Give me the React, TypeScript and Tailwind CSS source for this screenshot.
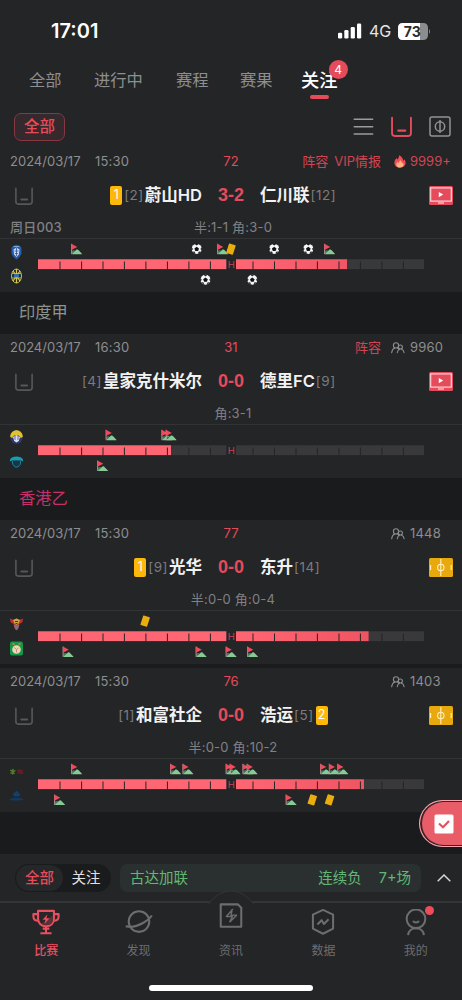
import React from "react";

type MarkerKind = "flag" | "ball" | "card";

interface Marker {
  kind: MarkerKind;
  x: number;
  row: "home" | "away";
}

interface Match {
  id: number;
  date: string;
  time: string;
  minute: string;
  tags: string[];
  viewers: string;
  hot?: boolean;
  home: string;
  homeRank: string;
  homeCards?: number;
  away: string;
  awayRank: string;
  awayCards?: number;
  score: string;
  note?: string;
  summary: string;
  media: "video" | "pitch";
  progress: number;
  markers: Marker[];
}

const place = (kind: MarkerKind, row: "home" | "away", xs: number[]): Marker[] =>
  xs.map((x) => ({ kind, row, x }));

/* ---------------- MATCH DATA ---------------- */
const ulsan: Match = {
  id: 1,
  date: "2024/03/17",
  time: "15:30",
  minute: "72",
  tags: ["阵容", "VIP情报"],
  viewers: "9999+",
  hot: true,
  home: "蔚山HD",
  homeRank: "[2]",
  homeCards: 1,
  away: "仁川联",
  awayRank: "[12]",
  score: "3-2",
  note: "周日003",
  summary: "半:1-1 角:3-0",
  media: "video",
  progress: 347,
  markers: [
    ...place("flag", "home", [71, 217, 324]),
    ...place("ball", "home", [196.7, 274.2, 308.3]),
    ...place("card", "home", [231]),
    ...place("ball", "away", [205.5, 252.3])
  ]
};

const kashmir: Match = {
  id: 2,
  date: "2024/03/17",
  time: "16:30",
  minute: "31",
  tags: ["阵容"],
  viewers: "9960",
  home: "皇家克什米尔",
  homeRank: "[4]",
  away: "德里FC",
  awayRank: "[9]",
  score: "0-0",
  summary: "角:3-1",
  media: "video",
  progress: 171,
  markers: [
    ...place("flag", "home", [105.5, 161.3, 165.5]),
    ...place("flag", "away", [97])
  ]
};

const kwongWah: Match = {
  id: 3,
  date: "2024/03/17",
  time: "15:30",
  minute: "77",
  tags: [],
  viewers: "1448",
  home: "光华",
  homeRank: "[9]",
  homeCards: 1,
  away: "东升",
  awayRank: "[14]",
  score: "0-0",
  summary: "半:0-0 角:0-4",
  media: "pitch",
  progress: 368.6,
  markers: [
    ...place("card", "home", [145.2]),
    ...place("flag", "away", [62.5, 195.5, 225.5, 247])
  ]
};

const wofoo: Match = {
  id: 4,
  date: "2024/03/17",
  time: "15:30",
  minute: "76",
  tags: [],
  viewers: "1403",
  home: "和富社企",
  homeRank: "[1]",
  away: "浩运",
  awayRank: "[5]",
  awayCards: 2,
  score: "0-0",
  summary: "半:0-0 角:10-2",
  media: "pitch",
  progress: 364,
  markers: [
    ...place("flag", "home", [71, 170, 182.3, 225.5, 229.5, 242.3, 246.5, 320, 328.7, 337.2]),
    ...place("flag", "away", [54, 285.5]),
    ...place("card", "away", [312.3, 329.6])
  ]
};

/* ---------------- SMALL ICONS ---------------- */
const TrayIcon = ({ className, size = 18 }: { className: string; size?: number }) => (
  <svg
    width={size}
    height={size}
    viewBox="0 0 20 20"
    fill="none"
    stroke="currentColor"
    strokeWidth="1.800"
    strokeLinecap="round"
    className={className}
  >
    <path d="M1 1.500v15Q1 19 3.500 19h13q2.500 0 2.500-2.500v-15" />
    <path d="M7 14h6.500" strokeWidth="2.200" />
  </svg>
);

const FlameIcon = () => (
  <svg width="12" height="13" viewBox="0 0 12 13">
    <path
      d="M4.900.2C5.500 2 4 3.300 3.300 4.600 2.800 4.200 2.700 3.600 2.700 3.100 1.300 4.400.3 6 .4 8c.1 2.700 2.400 4.700 5.500 4.700S11.600 10.700 11.600 8c0-1.400-.5-2.800-1.300-3.700-.1.700-.5 1.200-1 1.500C9 3.200 7.300 1 4.900.2Z"
      fill="#ed5058"
    />
    <path
      d="M5.900 5.200c.2 1.200-1.200 2-1.500 2.900-.4-.2-.6-.6-.6-1-1 .8-1.500 1.700-1.400 2.800.2 1.700 1.700 2.700 3.600 2.700s3.400-1 3.500-2.800c0-.8-.3-1.600-.8-2.200-.1.400-.3.700-.7.900 0-1.400-.8-2.700-2.100-3.300Z"
      fill="#ffb37c"
    />
  </svg>
);

const PeopleIcon = () => (
  <svg
    width="14"
    height="12"
    viewBox="0 0 14 12"
    fill="none"
    stroke="#8d8e90"
    strokeWidth="1.100"
    strokeLinecap="round"
  >
    <circle cx="5" cy="3.400" r="2.600" />
    <path d="M.7 10.800c.2-2.600 1.300-4 3-4.700M6.300 5.800c.9.500 1.400 1.200 1.800 2" />
    <circle cx="9.400" cy="5" r="2" />
    <path d="M6.300 10.800c.2-1.900.9-3 2.100-4M10.500 6.900c1.500.7 2.400 2 2.600 3.900" />
  </svg>
);

const VideoIcon = () => (
  <svg width="24" height="19" viewBox="0 0 24 19">
    <rect width="24" height="19" rx="1.500" fill="#e54b5b" />
    <rect x="1.700" y="1.900" width="20.600" height="13.200" fill="none" stroke="#f9d3d7" strokeWidth="1.200" />
    <path d="M9.800 6v5.200l4.400-2.600Z" fill="#fff" />
    <path d="M9 17h6" stroke="#f9d3d7" strokeWidth="1.200" />
  </svg>
);

const PitchIcon = () => (
  <svg width="24" height="19" viewBox="0 0 24 19">
    <rect width="24" height="19" rx="1.500" fill="#e7a90d" />
    <g fill="none" stroke="#fff0c4" strokeWidth="1.100">
      <path d="M11.800 1v17M1.600 7v5M22.200 7v5" />
      <circle cx="11.800" cy="9.500" r="3.200" />
    </g>
  </svg>
);

const CardBadge = ({ count }: { count: number }) => (
  <span className="flex h-[19px] w-3 items-center justify-center rounded-[2px] bg-[#fdb80a] text-[12.500px] leading-none text-white">
    {count}
  </span>
);

/* ---------------- TEAM CRESTS ---------------- */
const Crests = ({ id }: { id: number }) => {
  if (id === 1) {
    return (
      <>
        <path d="M11.500 8.500l2.500-2 2.500-.8 2.500.8 2.500 2v6q-1.500 4-5 6-3.500-2-5-6Z" fill="#245cae" />
        <path d="M13.500 10.500l3-2 3 2-.7 5-2.300 2.500-2.300-2.500Z" fill="#c9d8ed" />
        <path d="M14.500 12h4M15 14.500h3M16.500 9v8" stroke="#31528d" strokeWidth=".8" />
        <path d="M13.500 7.500h6" stroke="#71a7dc" strokeWidth="1" />
        <ellipse cx="16.500" cy="37" rx="5" ry="7" fill="#202b36" stroke="#c8bd45" strokeWidth="1" />
        <path
          d="M13 32l3.500 5-3.500 5M20 32l-3.500 5 3.500 5M16.500 30v14"
          fill="none"
          stroke="#d7c94e"
          strokeWidth="1.200"
        />
        <path d="M14 35h5v3.500h-5z" fill="#336fa7" />
        <path d="M12 34.500h9M12 39h9" stroke="#d7c94e" strokeWidth=".8" />
      </>
    );
  }
  if (id === 2) {
    return (
      <>
        <circle cx="16.500" cy="13" r="6" fill="#30366f" />
        <path d="M10.200 12c0-9 12.600-9 12.600 0l-2.200 1c-1-4-7.200-4-8.200 0Z" fill="#e1c331" />
        <path d="M13 12l3.500-2 3.500 2-1.200 4-2.300 1.500-2.300-1.500Z" fill="#dbe0ec" />
        <path d="M15 11v4M18 11v4" stroke="#454980" strokeWidth=".8" />
        <path d="M10 34.500c1.500-4 11.500-4 13 0v2l-2-1H12l-2 1Z" fill="#129eb4" />
        <path d="M12.500 36v3l2.500 3h3l2.500-3v-3" fill="#203544" stroke="#167e9a" />
      </>
    );
  }
  if (id === 3) {
    return (
      <>
        <path d="M9.800 7.500l4 1.500 2.700-1.500L19.200 9l4-1.500-1 4-3 1.500-1 5-1.700 1.500-1.700-1.500-1-5-3-1.500Z" fill="#be3131" />
        <path d="M13 9l3.500-1.500L20 9l-1.500 3.500-2 1.500-2-1.500Z" fill="#cda63e" />
        <path d="M13.500 13.500l3 1 3-1-1.500 4-1.500 1.500-1.500-1.500Z" fill="#78738c" />
        <path d="M15 10.500h3M15.500 12.500h2" stroke="#32364f" strokeWidth="1" />
        <rect x="10" y="30.500" width="13" height="14" rx="2" fill="#14964b" />
        <circle cx="16.500" cy="38.500" r="4.300" fill="#ead9b4" />
        <path d="M12.500 32.500l2 1M20.500 32.500l-2 1" stroke="#d77f2b" strokeWidth="1.800" />
        <path d="M14 36.500l2.500 2 2-1.500M16.500 38.500v3" fill="none" stroke="#c87b6c" strokeWidth=".8" />
      </>
    );
  }
  return (
    <>
      <path
        d="M10 11l1.500 1 1.500-1.500 1 2 1.500-1M10.500 14.500l2-1.500 2 2M12.500 10.500v5"
        fill="none"
        stroke="#4e7e26"
        strokeWidth="1.200"
      />
      <path
        d="M17 11l1.500 1 1-1.500 1.500 1.500 2-1M17.500 14.500l2-2 1 2 1.500-1.500 1 2"
        fill="none"
        stroke="#6b2026"
        strokeWidth="1.100"
      />
      <path d="M14 34l2.500-2.500L19 34l1.500 1-1.500 2.500h-5L12.500 35Z" fill="#123f6b" />
      <path d="M9 40.500l4-1.500h7l4 1.500-3 1h-9Z" fill="#113b61" />
    </>
  );
};

/* ---------------- EVENT TIMELINE ---------------- */
const TICKS = [
  60, 81.6, 103, 124.4, 145.9, 167.4, 188.9, 210.4, 253, 274.5, 296, 317.4, 339, 360.4, 381.9, 403.4
];

const MarkerShape = ({ kind }: { kind: MarkerKind }) => {
  if (kind === "flag") {
    return (
      <>
        <path d="M1.200 10.400V7.600l1.600-.9 1.300.5 1.300-1.400q1.500-.4 2.500 1l3 3.100v.5Z" fill="#86cb94" />
        <path d="M1.200 9.600V7l1.500-.6 1.200 1.200Z" fill="#47705a" />
        <path d="M.6 0v10.400" stroke="#b4a5a4" strokeWidth=".9" />
        <path d="M.4 0L6.300 3.100 .4 6.200Z" fill="#f04a5b" />
      </>
    );
  }
  if (kind === "ball") {
    return (
      <>
        <circle cx="0" cy="5.100" r="5" fill="#f6f6f6" />
        <path d="M0 2.900l2.300 1.700-.9 2.600h-2.800l-.9-2.600Z" fill="#111" />
        <path
          d="M-1.500.3h3L0 1.400ZM4.900 4v2.400L4 5.100ZM-4.900 4v2.400L-4 5.100ZM1.700 9.700l2.100-1.600-1.600-.1ZM-1.700 9.700l-2.100-1.600 1.600-.1Z"
          fill="#111"
          stroke="#111"
          strokeWidth=".4"
        />
      </>
    );
  }
  return (
    <rect x="-3.500" y=".3" width="7" height="10" rx=".6" fill="#e9ad10" transform="rotate(18 0 5.200)" />
  );
};

const Timeline = ({ match }: { match: Match }) => {
  const { id, progress, markers } = match;
  const gradientId = `progress-${id}`;

  return (
    <svg width="462" height="53" viewBox="0 0 462 53" className="block">
      <defs>
        <linearGradient id={gradientId} gradientUnits="userSpaceOnUse" x1="236" y1="0" x2="380" y2="0">
          <stop offset="0" stopColor="#ff6673" />
          <stop offset="1" stopColor="#ee5261" />
        </linearGradient>
      </defs>
      <Crests id={id} />
      <rect x="38" y="20.300" width="188.300" height="9.800" fill="#39393b" />
      <rect x="236" y="20.300" width="188" height="9.800" fill="#39393b" />
      <rect x="38" y="20.300" width={Math.min(progress, 226.3) - 38} height="9.800" fill="#ff6673" />
      {progress > 236 && (
        <rect x="236" y="20.300" width={progress - 236} height="9.800" fill={`url(#${gradientId})`} />
      )}
      {TICKS.map((x) => (
        <rect key={x} x={x - 0.5} y="22.500" width="1" height="7.700" fill="#242527" />
      ))}
      <text x="231.200" y="29" textAnchor="middle" fontSize="9.500" fill="#d33f50">
        H
      </text>
      {markers.map(({ kind, x, row }) => (
        <g key={`${kind}-${row}-${x}`} transform={`translate(${x} ${row === "home" ? 4.8 : 35.6})`}>
          <MarkerShape kind={kind} />
        </g>
      ))}
    </svg>
  );
};

/* ---------------- MATCH CARD ---------------- */
const MatchCard = ({ match }: { match: Match }) => (
  <article className="h-36 bg-[#242527]">
    <div className="grid h-[27px] grid-cols-[202px_58px_202px] items-center text-[13px] text-[#8d8e90]">
      <div className="flex gap-[15px] pl-[10px]">
        <span className="w-[70px] whitespace-nowrap">{match.date}</span>
        <span className="tracking-[0.2px]">{match.time}</span>
      </div>
      <span className="text-center text-[#e54b5b]">{match.minute}</span>
      <div className="flex items-center justify-end">
        <div className="flex gap-1.5 text-[#d04553]">
          {match.tags.map((tag) => (
            <span key={tag}>{tag}</span>
          ))}
        </div>
        {match.hot ? (
          <span className="ml-[13px] flex w-4">
            <FlameIcon />
          </span>
        ) : (
          <span className="ml-[10px] flex w-[19px]">
            <PeopleIcon />
          </span>
        )}
        <span className={match.hot ? "w-[52px] text-[#d04553]" : "w-[52px] tracking-[0.2px]"}>
          {match.viewers}
        </span>
      </div>
    </div>

    <div className="grid h-10 grid-cols-[202px_58px_169px_33px] items-center">
      <div className="flex items-center justify-between pl-[15px]">
        <TrayIcon className="mt-0.5 text-[#56575a]" />
        <div className="flex items-center">
          {match.homeCards && <CardBadge count={match.homeCards} />}
          <span className="mr-px ml-0.5 text-[13.500px] tracking-[0.5px] text-[#7b7c7f]">
            {match.homeRank}
          </span>
          <span className="text-[16.500px] font-semibold text-[#f2f2f3]">{match.home}</span>
        </div>
      </div>
      <span className="text-center font-['Liberation_Sans',sans-serif] text-[18px] font-bold text-[#e54b5b]">
        {match.score}
      </span>
      <div className="flex items-center">
        <span className="text-[16.500px] font-semibold text-[#f2f2f3]">{match.away}</span>
        <span className="mr-0.5 ml-px text-[13.500px] tracking-[0.5px] text-[#7b7c7f]">
          {match.awayRank}
        </span>
        {match.awayCards && <CardBadge count={match.awayCards} />}
      </div>
      {match.media === "video" ? <VideoIcon /> : <PitchIcon />}
    </div>

    <div className="grid h-[24px] grid-cols-[130px_202px_130px] items-center border-b border-[#323335] pt-[2px] text-[13px] text-[#808184]">
      <span className="pl-[10px] font-medium tracking-[0.2px]">{match.note}</span>
      <span className="pl-1 text-center tracking-[0.2px]">{match.summary}</span>
    </div>
    <Timeline match={match} />
  </article>
);

const LeagueHeader = ({ name, className }: { name: string; className: string }) => (
  <h2 className={`flex h-[42px] items-center pb-0.5 pl-[19px] text-[16.300px] ${className}`}>{name}</h2>
);

/* ---------------- STATUS BAR ---------------- */
const StatusBar = () => (
  <div className="flex h-[50px] items-end justify-between pr-[31px] pb-[5px] pl-[51px] text-white">
    <span className="text-[20px] leading-[27px] font-semibold">17:01</span>
    <div className="flex h-[27px] items-center pb-px">
      <svg width="24" height="16" viewBox="0 0 24 16" fill="#fff">
        <rect x="0" y="9.700" width="4.200" height="5.800" rx="1.300" />
        <rect x="6.300" y="7" width="4.200" height="8.500" rx="1.300" />
        <rect x="12.700" y="4" width="4.200" height="11.500" rx="1.300" />
        <rect x="19" y=".5" width="4.200" height="15" rx="1.300" />
      </svg>
      <span className="ml-[7px] w-[29px] text-[16px] text-[#e4e4e5]">4G</span>
      <svg width="33" height="17" viewBox="0 0 33 17">
        <path d="M5 0h20q5 0 5 5v7q0 5-5 5H5q-5 0-5-5V5q0-5 5-5Z" fill="#8c8d8f" />
        <path d="M5 0h17v17H5q-5 0-5-5V5q0-5 5-5Z" fill="#fff" />
        <path d="M31 6q2 2.500 0 5Z" fill="#8c8d8f" />
        <text x="14.200" y="13.500" textAnchor="middle" fontSize="14" fontWeight="700" fill="#2b2c2e">
          73
        </text>
      </svg>
    </div>
  </div>
);

/* ---------------- TOP TABS ---------------- */
const TopTabs = () => (
  <nav className="flex h-[62px] items-start pl-[29px] text-[16.300px] text-[#8d8e90]">
    <button className="mt-[18px] w-[65px] text-left leading-6">全部</button>
    <button className="mt-[18px] w-[82px] text-left leading-6">进行中</button>
    <button className="mt-[18px] w-16 text-left leading-6">赛程</button>
    <button className="mt-[18px] w-[61px] text-left leading-6">赛果</button>
    <button className="relative mt-[16px] text-left text-[18.300px] leading-7 font-medium text-white">
      关注
      <span className="mx-auto mt-[1px] block h-[4px] w-[19px] rounded-full bg-[#e54b5b]" />
      <span className="absolute -top-[6px] -right-[10px] flex size-[19px] items-center justify-center rounded-full bg-[#e54b5b] text-[12px] leading-none font-normal">
        4
      </span>
    </button>
  </nav>
);

const FilterBar = () => (
  <div className="flex h-9 items-start justify-between pr-[11px] pl-[14px]">
    <button className="mt-px flex h-7 w-[51px] items-center justify-center rounded-[7px] border border-[#873741] bg-[#35292d] text-[15.500px] font-medium text-[#e54b5b]">
      全部
    </button>
    <div className="mt-1 flex items-center gap-[17px]">
      <svg width="21" height="21" viewBox="0 0 21 21" stroke="#9a9b9d" strokeWidth="1.400" strokeLinecap="round">
        <path d="M1.200 3.300h18.500M1.200 10.700h18.500M1.200 18h18.500" />
      </svg>
      <TrayIcon size={21} className="text-[#e54b5b]" />
      <svg width="22" height="21" viewBox="0 0 22 21" fill="none" stroke="#919294" strokeWidth="1.500">
        <rect x="1" y="1" width="20" height="19" rx="2" />
        <path d="M11 4v13" />
        <circle cx="11" cy="10.500" r="4.700" />
      </svg>
    </div>
  </div>
);

/* ---------------- BOTTOM AREA ---------------- */
const Ticker = () => (
  <div className="flex h-[47px] items-center bg-[#242527] pl-[15px]">
    <div className="flex h-7 w-24 rounded-full bg-[#1a1b1d] p-px text-[14.500px]">
      <button className="w-[47px] rounded-full bg-[#262729] font-medium text-[#e54b5b]">全部</button>
      <button className="flex-1 pr-px text-center text-[#e0e1e2]">关注</button>
    </div>
    <div className="ml-[9px] flex h-7 w-[301px] items-center rounded-[7px] bg-[#29302f] px-[10px] text-[14.500px] text-[#63b775]">
      <span>古达加联</span>
      <span className="ml-auto">连续负</span>
      <span className="ml-[17px]">7+场</span>
    </div>
    <svg width="14" height="8" viewBox="0 0 14 8" fill="none" stroke="#d5d5d6" strokeWidth="1.500" className="ml-4">
      <path d="M.7 7.300L7 1l6.300 6.300" />
    </svg>
  </div>
);

const navItems = [
  {
    label: "比赛",
    active: true,
    icon: (
      <>
        <path d="M6.500 2h17v8.500c0 5-3.500 8-8.500 8s-8.500-3-8.500-8Z" fill="#292629" />
        <path d="M22.300 7v4c0 4-2.800 6.300-7.300 6.300-2 0-3.500-.5-5-1.500Z" fill="#5a3039" stroke="none" />
        <path d="M6.500 5.500H1.500v2.500c0 3 2 4.500 5.500 4.500M23.500 5.500h5v2.500c0 3-2 4.500-5.500 4.500M15 18.500V25.500M9 26h12M11.500 21h7" />
        <path d="M16.500 5.800l-5.300 5.700h3.300l-1 4.300 5.300-6h-3.300Z" fill="currentColor" stroke="none" />
      </>
    )
  },
  {
    label: "发现",
    icon: (
      <>
        <circle cx="15" cy="13.500" r="11" />
        <path d="M.8 18.500c6 1.500 13-.5 18.500-3.500 4-2.200 7.500-5 9.500-8" />
      </>
    )
  },
  {
    label: "资讯",
    raised: true,
    icon: (
      <>
        <path d="M4 1.500h18.500l3.500 3.500v20.500H4Z" />
        <path d="M17 6.500L10 14.500h6.500L13.500 20.500M16.500 6.500l-1.500 6.500h6L13.500 20.500" strokeWidth="1.500" />
      </>
    )
  },
  {
    label: "数据",
    icon: (
      <>
        <path d="M15 1l10.800 5v15L15 26.500 4.200 21V6Z" />
        <path d="M9 16.500l4.500-4.500 2.500 4 5-5" />
      </>
    )
  },
  {
    label: "我的",
    dot: true,
    icon: (
      <>
        <circle cx="15" cy="10.500" r="10" />
        <path d="M12 12.500c.7 2.500 5.300 2.500 6 0M6.500 28c.5-4.500 4-7.300 8.500-7.300s8 2.800 8.500 7.300" />
      </>
    )
  }
];

const BottomNav = () => (
  <nav className="relative h-[99px] border-t-2 border-[#343537] bg-[#242527]">
    {/* raised middle tab */}
    <svg width="50" height="16" viewBox="0 0 50 16" className="absolute -top-[13px] left-[206px]">
      <path d="M0 16l3-3.500Q12 1 25 1t22 11.500l3 3.500Z" fill="#242527" />
      <path d="M2.500 14Q12 1 25 1t22.500 13" fill="none" stroke="#343537" />
    </svg>
    <div className="relative grid grid-cols-5">
      {navItems.map(({ label, active, raised, dot, icon }) => (
        <button
          key={label}
          className={`flex h-[60px] flex-col items-center ${active ? "text-[#e8505f]" : "text-[#6c6d70]"}`}
        >
          <span className={raised ? "relative" : "relative mt-[6px]"}>
            <svg
              width="28"
              height="28"
              viewBox="0 0 30 30"
              fill="none"
              stroke="currentColor"
              strokeWidth="2.200"
              strokeLinejoin="round"
            >
              {icon}
            </svg>
            {dot && <span className="absolute -top-[3px] -right-1 size-[9px] rounded-full bg-[#ee4b5b]" />}
          </span>
          <span
            className={`text-[12px] leading-4 ${raised ? "mt-[12px]" : "mt-[6px]"} ${active ? "font-medium" : ""}`}
          >
            {label}
          </span>
        </button>
      ))}
    </div>
    <div className="mx-auto mt-[22px] h-[6px] w-[164px] rounded-full bg-white" />
  </nav>
);

const FloatingSlip = () => (
  <button className="absolute top-[800px] right-0 flex h-[47px] w-[43px] items-center rounded-l-full border border-r-0 border-[#f3a6ae] bg-[#e95d69] pl-[14px] shadow-[inset_1px_0_0_1px_#3a2429]">
    <svg width="20" height="20" viewBox="0 0 20 20">
      <rect x=".5" y=".5" width="19" height="19" rx="1.500" fill="#fff" />
      <path d="M5 9.500l4 3.800 6-6.300" fill="none" stroke="#e5505f" strokeWidth="2.200" />
    </svg>
  </button>
);

/* ---------------- MAIN COMPONENT ---------------- */
const App: React.FC = () => {
  return (
    <div className="relative flex h-[1000px] w-[462px] flex-col overflow-hidden bg-[#1a1b1d] font-['Inter','Noto_Sans_CJK_SC',sans-serif]">
      <header className="bg-[#242527]">
        <StatusBar />
        <TopTabs />
        <FilterBar />
      </header>

      <main className="flex-1">
        <MatchCard match={ulsan} />
        <LeagueHeader name="印度甲" className="text-[#8a9590]" />
        <MatchCard match={kashmir} />
        <LeagueHeader name="香港乙" className="text-[#c72f69]" />
        <MatchCard match={kwongWah} />
        <div className="h-1" />
        <MatchCard match={wofoo} />
      </main>

      <Ticker />
      <BottomNav />
      <FloatingSlip />
    </div>
  );
};

export default App;
